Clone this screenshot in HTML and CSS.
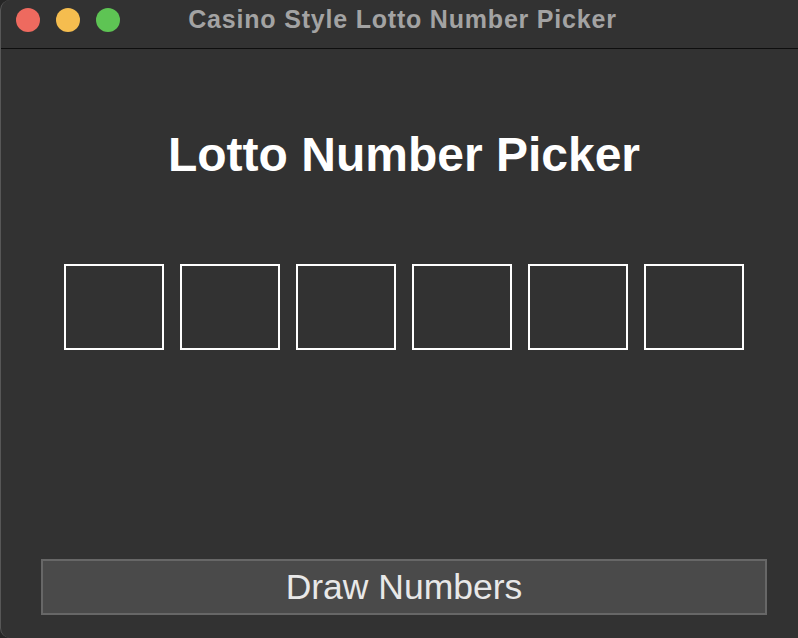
FILE: index.html
```html
<!DOCTYPE html>
<html lang="en">
<head>
  <meta charset="UTF-8">
  <meta name="viewport" content="width=device-width, initial-scale=1.0">
  <title>Casino Style Lotto Number Picker</title>
  <link rel="stylesheet" href="styles.css">
</head>
<body>
  <div class="window">
    <div class="titlebar">
      <div class="lights">
        <span class="light red"></span>
        <span class="light yellow"></span>
        <span class="light green"></span>
      </div>
      <div class="window-title">Casino Style Lotto Number Picker</div>
    </div>
    <div class="content">
      <h1>Lotto Number Picker</h1>
      <div class="numbers">
        <div class="ball"></div>
        <div class="ball"></div>
        <div class="ball"></div>
        <div class="ball"></div>
        <div class="ball"></div>
        <div class="ball"></div>
      </div>
      <button id="draw">Draw Numbers</button>
    </div>
  </div>
</body>
</html>
```

FILE: styles.css
```css
body {
  margin: 0;
  background-color: #262626;
  font-family: 'Liberation Sans', Arial, sans-serif;
}

.window {
  height: 638px;
  background-color: #323232;
  border-left: 1px solid #575757;
  border-radius: 10px 0 0 10px;
  overflow: hidden;
  display: flex;
  flex-direction: column;
}

.titlebar {
  position: relative;
  height: 48px;
  border-bottom: 1px solid #0e0e0e;
  flex-shrink: 0;
}

.lights {
  position: absolute;
  left: 15px;
  top: 8px;
  display: flex;
  gap: 16px;
}

.light {
  width: 24px;
  height: 24px;
  border-radius: 50%;
}

.red { background-color: #ee6a5f; }
.yellow { background-color: #f5bd4f; }
.green { background-color: #5ec454; }

.window-title {
  text-align: center;
  padding-left: 6px;
  font-size: 25px;
  font-weight: bold;
  letter-spacing: 0.8px;
  line-height: 38px;
  color: #a3a3a3;
}

.content {
  flex: 1;
  display: flex;
  flex-direction: column;
  padding: 78px 31px 23px 40px;
}

h1 {
  margin: 0;
  text-align: center;
  font-size: 48px;
  line-height: 56px;
  font-weight: bold;
  color: #ffffff;
}

.numbers {
  display: flex;
  justify-content: center;
  gap: 16px;
  margin-top: 81px;
}

.ball {
  width: 96px;
  height: 82px;
  border: 2px solid #ffffff;
}

button {
  margin-top: auto;
  height: 56px;
  background-color: #4a4a4a;
  border: 2px solid #676767;
  color: #e8e8e8;
  font-family: 'Liberation Sans', Arial, sans-serif;
  font-size: 35.5px;
  padding: 0;
}
```
